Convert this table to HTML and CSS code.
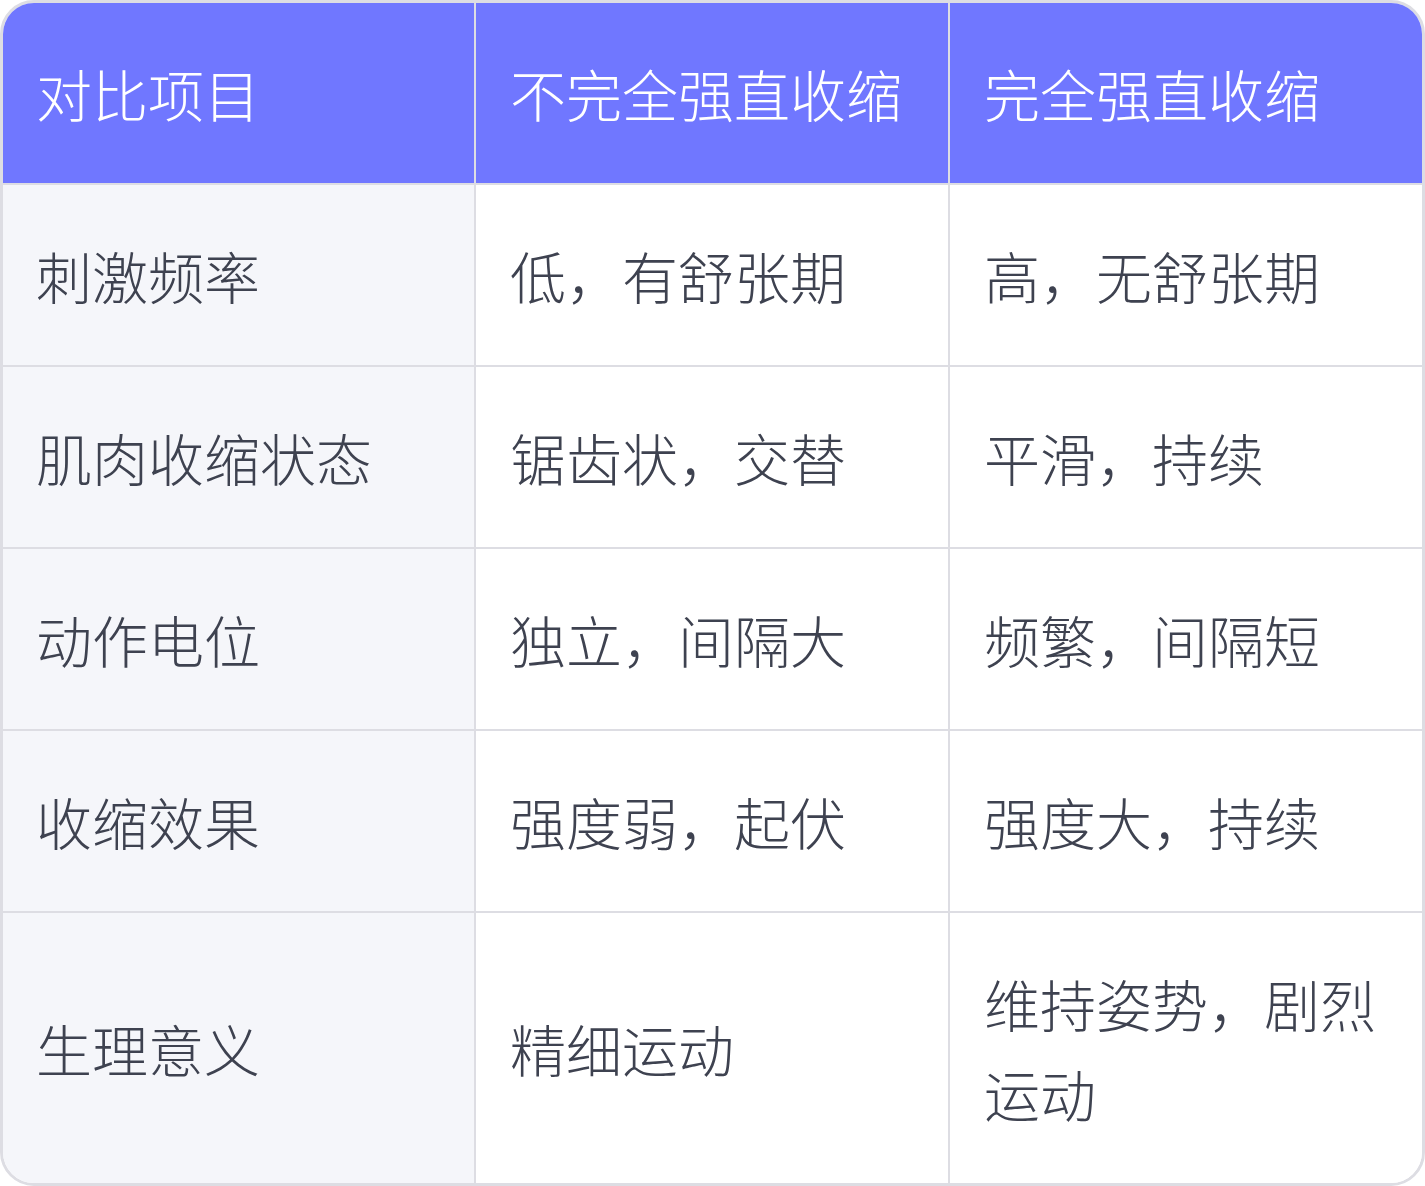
FILE: index.html
```html
<!DOCTYPE html>
<html lang="zh-CN">
<head>
<meta charset="utf-8">
<title>不完全强直收缩与完全强直收缩对比</title>
<link rel="stylesheet" href="styles.css">
</head>
<body>
<table class="compare">
  <colgroup>
    <col class="c1"><col class="c2"><col class="c3">
  </colgroup>
  <thead>
    <tr>
      <th>对比项目</th>
      <th>不完全强直收缩</th>
      <th>完全强直收缩</th>
    </tr>
  </thead>
  <tbody>
    <tr>
      <td class="label">刺激频率</td>
      <td>低，有舒张期</td>
      <td>高，无舒张期</td>
    </tr>
    <tr>
      <td class="label">肌肉收缩状态</td>
      <td>锯齿状，交替</td>
      <td>平滑，持续</td>
    </tr>
    <tr>
      <td class="label">动作电位</td>
      <td>独立，间隔大</td>
      <td>频繁，间隔短</td>
    </tr>
    <tr>
      <td class="label">收缩效果</td>
      <td>强度弱，起伏</td>
      <td>强度大，持续</td>
    </tr>
    <tr>
      <td class="label">生理意义</td>
      <td>精细运动</td>
      <td>维持姿势，剧烈运动</td>
    </tr>
  </tbody>
</table>
</body>
</html>
```
FILE: styles.css
```css
html, body {
  margin: 0;
  padding: 0;
  background: #ffffff;
}

.compare {
  width: 1425px;
  height: 1186px;
  border-collapse: separate;
  border-spacing: 0;
  table-layout: fixed;
  border: 3px solid #dddde3;
  border-radius: 34px;
  overflow: hidden;
  font-family: "Noto Sans CJK SC", "Noto Sans", sans-serif;
  font-weight: 300;
  font-size: 56px;
  line-height: 90px;
  color: #3e4250;
  box-sizing: border-box;
}

.c1 { width: 473px; }
.c2 { width: 474px; }
.c3 { width: 472px; }

.compare th,
.compare td {
  padding: 45px 35px 45px 34px;
  text-align: left;
  vertical-align: middle;
  border-right: 2px solid #dddde3;
  border-bottom: 2px solid #dddde3;
  font-weight: 300;
}

.compare tr > :first-child {
  padding-left: 33px;
}

.compare tr > :last-child {
  border-right: none;
}

.compare tbody tr:last-child > * {
  border-bottom: none;
}

.compare th {
  background: #7077ff;
  color: #ffffff;
}

.compare td {
  background: #ffffff;
}

.compare td.label {
  background: #f5f6fa;
}
```
